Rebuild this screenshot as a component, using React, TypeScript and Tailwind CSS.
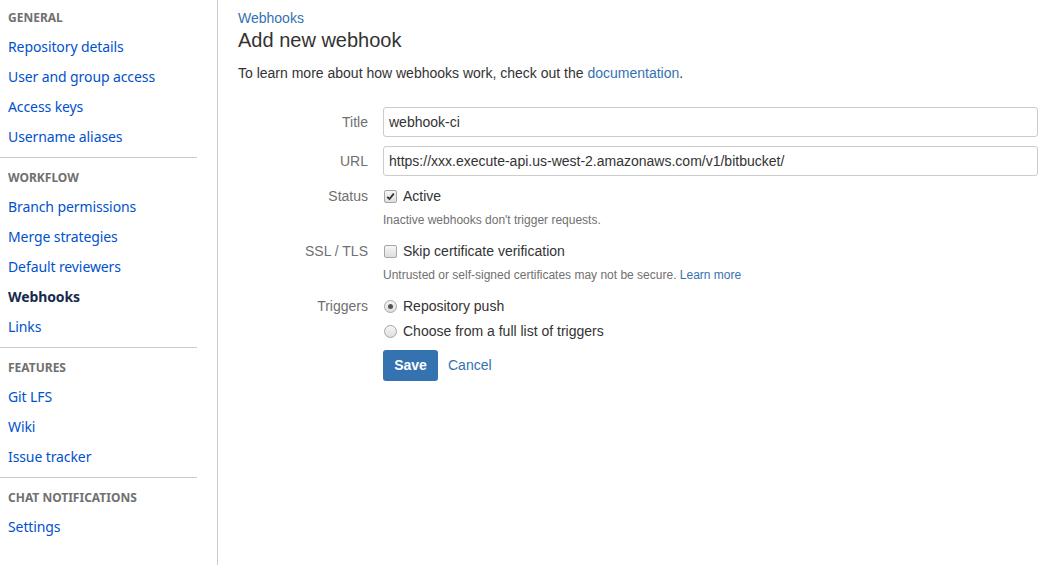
import React from "react";

type NavItem = { label: string; active?: boolean };
type NavGroup = { title: string; items: NavItem[] };

const groups: NavGroup[] = [
  {
    title: "General",
    items: [
      { label: "Repository details" },
      { label: "User and group access" },
      { label: "Access keys" },
      { label: "Username aliases" },
    ],
  },
  {
    title: "Workflow",
    items: [
      { label: "Branch permissions" },
      { label: "Merge strategies" },
      { label: "Default reviewers" },
      { label: "Webhooks", active: true },
      { label: "Links" },
    ],
  },
  {
    title: "Features",
    items: [{ label: "Git LFS" }, { label: "Wiki" }, { label: "Issue tracker" }],
  },
  {
    title: "Chat notifications",
    items: [{ label: "Settings" }],
  },
];

const Checkbox = ({ checked }: { checked?: boolean }) => (
  <span className="flex h-[13px] w-[13px] shrink-0 items-center justify-center rounded-[2px] border border-[#a6a6a6] bg-gradient-to-b from-[#f6f6f6] to-[#dedede]">
    {checked && (
      <svg width="9" height="9" viewBox="0 0 9 9">
        <path d="M1.2 4.8 L3.5 7 L7.8 1.6" fill="none" stroke="#333" strokeWidth="1.8" />
      </svg>
    )}
  </span>
);

const Radio = ({ checked }: { checked?: boolean }) => (
  <span className="flex h-[13px] w-[13px] shrink-0 items-center justify-center rounded-full border border-[#a6a6a6] bg-gradient-to-b from-[#f6f6f6] to-[#dedede]">
    {checked && <span className="h-[5px] w-[5px] rounded-full bg-[#555]" />}
  </span>
);

const Sidebar = () => (
  <div
    className="w-[218px] shrink-0 border-r border-[#ccc] pr-[20px] pt-[2px]"
    style={{ fontFamily: '"Noto Sans", "Open Sans", sans-serif' }}
  >
    {groups.map((g, i) => (
      <div key={g.title}>
        {i > 0 && <div className="mt-[5px] mb-[4px] h-[1px] bg-[#ccc]" />}
        <div className="flex h-[30px] items-center pl-[8px] pt-[2px] text-[12px] font-bold uppercase text-[#707070]">
          {g.title}
        </div>
        {g.items.map((it) => (
          <div
            key={it.label}
            className={
              it.active
                ? "flex h-[30px] items-center pb-[2px] pl-[8px] text-[14px] font-bold tracking-[-0.1px] text-[#172b4d]"
                : "flex h-[30px] items-center pb-[2px] pl-[8px] text-[14px] tracking-[-0.1px] text-[#0052cc]"
            }
          >
            {it.label}
          </div>
        ))}
      </div>
    ))}
  </div>
);

const App = () => {
  return (
    <div
      className="flex h-[565px] w-[1041px] bg-white text-[#333]"
      style={{ fontFamily: '"Liberation Sans", Arial, sans-serif' }}
    >
      <Sidebar />
      <div className="flex-1 pl-[20px] pr-[3px] pt-[9px]">
        <div className="text-[14px] leading-[18px] text-[#3572b0]">Webhooks</div>
        <h1 className="text-[20px] leading-[26px] text-[#333]">Add new webhook</h1>
        <p className="mt-[11px] text-[14px] leading-[18px]">
          To learn more about how webhooks work, check out the{" "}
          <span className="text-[#3572b0]">documentation</span>.
        </p>

        <div className="mt-[25px] grid grid-cols-[130px_1fr] gap-x-[15px] text-[14px]">
          <div className="flex h-[30px] items-center justify-end text-[#707070]">Title</div>
          <div className="flex h-[30px] items-center rounded-[3px] border border-[#ccc] px-[5px]">
            webhook-ci
          </div>

          <div className="mt-[9px] flex h-[30px] items-center justify-end text-[#707070]">URL</div>
          <div className="mt-[9px] flex h-[30px] items-center rounded-[3px] border border-[#ccc] px-[5px]">
            https://xxx.execute-api.us-west-2.amazonaws.com/v1/bitbucket/
          </div>

          <div className="mt-[10px] flex h-[20px] items-center justify-end text-[#707070]">Status</div>
          <div className="mt-[10px] flex h-[20px] items-center gap-[6px] pl-[1px]">
            <Checkbox checked />
            <span>Active</span>
          </div>

          <div />
          <div className="mt-[6px] text-[12px] leading-[16px] text-[#707070]">
            Inactive webhooks don't trigger requests.
          </div>

          <div className="mt-[13px] flex h-[20px] items-center justify-end text-[#707070]">SSL / TLS</div>
          <div className="mt-[13px] flex h-[20px] items-center gap-[6px] pl-[1px]">
            <Checkbox />
            <span>Skip certificate verification</span>
          </div>

          <div />
          <div className="mt-[6px] text-[12px] leading-[16px] text-[#707070]">
            Untrusted or self-signed certificates may not be secure.{" "}
            <span className="text-[#3572b0]">Learn more</span>
          </div>

          <div className="mt-[13px] flex h-[20px] items-center justify-end text-[#707070]">Triggers</div>
          <div className="mt-[13px] flex h-[20px] items-center gap-[6px] pl-[1px]">
            <Radio checked />
            <span>Repository push</span>
          </div>

          <div />
          <div className="mt-[5px] flex h-[20px] items-center gap-[6px] pl-[1px]">
            <Radio />
            <span>Choose from a full list of triggers</span>
          </div>

          <div />
          <div className="mt-[9px] flex items-center gap-[10px]">
            <button className="h-[31px] w-[55px] rounded-[3px] bg-[#3572b0] font-bold text-white">
              Save
            </button>
            <span className="text-[#3572b0]">Cancel</span>
          </div>
        </div>
      </div>
    </div>
  );
};

export default App;
